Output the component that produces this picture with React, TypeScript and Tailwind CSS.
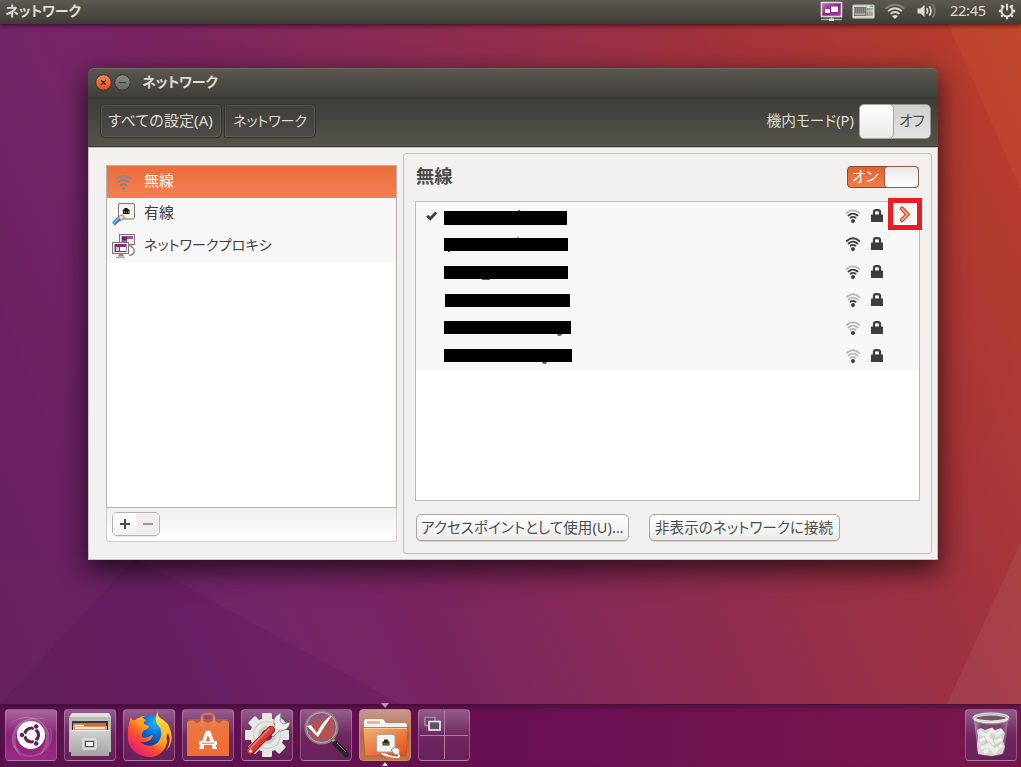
import React from "react";

type KidsProps = { children?: React.ReactNode };

function Wallpaper() {
  return (
    <svg className="absolute inset-0" width="1021" height="767" viewBox="0 0 1021 767">
      <defs>
        <linearGradient id="wall" gradientUnits="userSpaceOnUse" x1="0" y1="767" x2="1136" y2="256">
          <stop offset="0" stopColor="#67215f" />
          <stop offset="0.150" stopColor="#6b2163" />
          <stop offset="0.250" stopColor="#742569" />
          <stop offset="0.370" stopColor="#7a245e" />
          <stop offset="0.480" stopColor="#852957" />
          <stop offset="0.750" stopColor="#9f3240" />
          <stop offset="0.885" stopColor="#b03a33" />
          <stop offset="1" stopColor="#bd432d" />
        </linearGradient>
      </defs>
      <rect width="1021" height="767" fill="url(#wall)" />
      <polygon points="675,24 948,24 1021,190 1021,350 938,560 500,560 500,300" fill="#b0301c" opacity="0.1" />
      <polygon points="948,24 1021,24 1021,190" fill="#d8602f" opacity="0.18" />
      <polygon points="0,305 100,560 0,560" fill="#6a1a70" opacity="0.1" />
      <polygon points="135,558 0,704 400,704" fill="#4a1050" opacity="0.150" />
      <polygon points="1021,542 1021,704 947,704" fill="#ffffff" opacity="0.06" />
    </svg>
  );
}

function PanelIcons() {
  return (
    <div className="relative -top-px flex items-center">
      <svg width="24" height="22" viewBox="0 0 24 22">
        <defs>
          <linearGradient id="scr" x1="0" y1="0" x2="1" y2="1">
            <stop offset="0" stopColor="#c77cc4" />
            <stop offset="0.5" stopColor="#8d2089" />
            <stop offset="1" stopColor="#a548a0" />
          </linearGradient>
        </defs>
        <rect x="1.5" y="2.500" width="20" height="14" fill="url(#scr)" stroke="#dcd9d4" strokeWidth="1.6" />
        <rect x="5" y="9" width="5" height="4" fill="#f8eff7" />
        <rect x="11" y="6.500" width="7" height="5.500" fill="#fff" />
        <path d="M11.500 17v2M1 19.500h21" stroke="#aaa79f" strokeWidth="1.400" />
        <rect x="9" y="18.500" width="5" height="2.500" fill="#dfdbd2" />
      </svg>
      <svg className="ml-[8px]" width="23" height="15" viewBox="0 0 23 15">
        <rect x="0.5" y="0.8" width="22" height="13.500" rx="1" fill="#dedcd6" stroke="#98958c" />
        <rect x="2" y="3" width="12.500" height="9" fill="#74736e" />
        <rect x="15" y="4" width="5.500" height="8" fill="#868580" />
        <path d="M2 5h13M2 7h13M2 9h13" stroke="#bbb9b3" strokeWidth="0.7" strokeDasharray="1 1" />
        <path d="M16.800 3v9M19 3v9M15 7h6" stroke="#dedcd6" strokeWidth="0.8" />
        <rect x="3" y="9.500" width="10" height="1.200" fill="#c5c3bd" />
        <rect x="18" y="1.800" width="3" height="1.300" fill="#64c45c" />
      </svg>
      <svg className="ml-[9px]" width="22" height="18" viewBox="0 0 22 18" fill="none" strokeLinecap="butt">
        <path d="M1.600 6.600 Q11 -1.200 20.400 6.600" stroke="#85837b" strokeWidth="1.600" />
        <path d="M4 9.200 Q11 3.300 18 9.200" stroke="#dfdbd2" strokeWidth="1.700" />
        <path d="M6.500 11.800 Q11 8.200 15.500 11.800" stroke="#dfdbd2" strokeWidth="1.700" />
        <path d="M8 13.900 Q11 11.900 14 13.900 L11 17z" fill="#dfdbd2" />
      </svg>
      <svg className="ml-[10px]" width="22" height="18" viewBox="0 0 22 18" fill="none">
        <path d="M1.500 6.500h3L8.500 3v12l-4-3.500h-3z" fill="#dfdbd2" />
        <path d="M10.700 6.300q1.800 2.700 0 5.400M13.400 4.300q3.100 4.700 0 9.400" stroke="#dfdbd2" strokeWidth="1.700" />
        <path d="M16.500 2.300q4.500 6.700 0 13.400" stroke="#85837b" strokeWidth="1.500" />
      </svg>
      <span className="ml-[12px] w-[37px] whitespace-nowrap text-[14.600px] tracking-[-0.300px]">22:45</span>
      <svg className="ml-[11px]" width="18" height="18" viewBox="0 0 18 18" fill="none" stroke="#dfdbd2">
        <path d="M6.300 4.100a5.500 5.500 0 1 0 5.400 0" strokeWidth="2" />
        <path d="M9 1.800v6.400" strokeWidth="2" />
        <path d="M3.200 3.200l2 2M14.800 3.200l-2 2M.8 9h2.500M14.700 9h2.500M3.200 14.800l2-2M14.800 14.800l-2-2M9 14.600v2.600" strokeWidth="2.300" />
      </svg>
    </div>
  );
}

function TopBar() {
  return (
    <header className="relative flex h-6 shrink-0 items-center justify-between bg-gradient-to-b from-[#5b5950] to-[#3e3d37] pl-[5px] pr-[5px] text-[#dfdbd2] shadow-[0_1px_5px_rgba(0,0,0,0.7)]">
      <span className="relative -top-[2px] whitespace-nowrap text-[14px] font-bold tracking-[-0.150px]">ネットワーク</span>
      <PanelIcons />
    </header>
  );
}

function TitleBar() {
  return (
    <div className="flex h-[29px] items-center rounded-t-[6px] border-t border-[#6b6960] bg-gradient-to-b from-[#59574f] to-[#403f3a] pl-[7px]">
      <svg className="relative -top-px" width="36" height="18" viewBox="0 0 36 18">
        <defs>
          <linearGradient id="close" x1="0" y1="0" x2="0" y2="1">
            <stop offset="0" stopColor="#f58a62" />
            <stop offset="1" stopColor="#e0501c" />
          </linearGradient>
          <linearGradient id="mini" x1="0" y1="0" x2="0" y2="1">
            <stop offset="0" stopColor="#8e8c85" />
            <stop offset="1" stopColor="#66655f" />
          </linearGradient>
        </defs>
        <circle cx="8.500" cy="9.500" r="7.800" fill="url(#close)" stroke="#33322e" />
        <path d="M6 7l5 5M11 7l-5 5" stroke="#522612" strokeWidth="1.100" />
        <circle cx="27.500" cy="9.500" r="7.800" fill="url(#mini)" stroke="#33322e" />
        <path d="M24 9.500h7" stroke="#393833" strokeWidth="1.100" />
      </svg>
      <span className="relative -top-[2px] ml-[11px] whitespace-nowrap text-[14px] font-bold tracking-[-0.150px] text-[#dfdbd2]">ネットワーク</span>
    </div>
  );
}

function Toolbar() {
  const crumb =
    "flex items-center whitespace-nowrap border border-[#35342f] bg-gradient-to-b from-[#403f3a] to-[#4d4b44] shadow-[inset_0_0_0_1px_rgba(255,255,255,0.09)]";
  return (
    <div className="flex h-[50px] items-center justify-between border-b border-[#383732] bg-gradient-to-b from-[#3c3b37] to-[#54534a] pl-3 pr-[7px] text-[14.500px] text-[#dfdbd2]">
      <div className="relative -top-px flex gap-[2px]">
        <button className={crumb + " h-[34px] w-[122px] rounded-[5px] pl-[7px] text-[15px] tracking-[0.100px]"}>
          <span>すべての設定(A)</span>
        </button>
        <button className={crumb + " h-[34px] w-[92px] rounded-r-[5px] pl-2 text-[14px]"}>ネットワーク</button>
      </div>
      <div className="flex items-center gap-[5px]">
        <span className="relative -top-px whitespace-nowrap text-[14.700px] tracking-[0.050px]">機内モード(P)</span>
        <div className="flex h-[35px] w-[72px] rounded-[5px] border border-[#96948e] bg-gradient-to-b from-[#cfcfcf] to-[#e4e4e4] text-[#4c4c4c]">
          <div className="-my-px -ml-px w-[35px] rounded-[5px] border border-[#a7a49e] bg-gradient-to-b from-white to-[#e9e9e8]" />
          <span className="relative -top-px flex flex-1 items-center justify-center whitespace-nowrap text-[14.500px]">オフ</span>
        </div>
      </div>
    </div>
  );
}

function SideWifi() {
  return (
    <svg width="24" height="24" viewBox="0 0 24 24" fill="none" stroke="#8c8781" strokeWidth="2" strokeLinecap="round">
      <path d="M4.500 8.500Q11.500 3 18.500 8.500M6.500 12Q11.500 8 16.500 12M8.500 15.300Q11.500 13 14.500 15.300" />
      <circle cx="11.500" cy="18.300" r="1.500" fill="#8c8781" stroke="none" />
    </svg>
  );
}

function SideWired() {
  return (
    <svg width="24" height="24" viewBox="0 0 24 24">
      <rect x="6.500" y="1.500" width="16" height="15.500" rx="1.500" fill="#f2f2f0" stroke="#777872" />
      <path d="M11 12V7.500h1.500V6h3v1.500h2V12z" fill="#080808" />
      <path d="M12.500 9v2M14.500 9v2M16.500 9v2" stroke="#bba622" strokeWidth="0.800" />
      <path d="M6.500 14.500l4-1.500 2 2.500-3.500 3-3 .5z" fill="#ddd" stroke="#777" strokeWidth="0.900" />
      <path d="M1.500 22l6-6" stroke="#3c6ea8" strokeWidth="4" />
      <path d="M1.500 21.500l6-6" stroke="#9ec4e8" strokeWidth="1.500" />
      <path d="M8 14l3 3" stroke="#fff" />
    </svg>
  );
}

function SideProxy() {
  return (
    <svg width="26" height="26" viewBox="0 0 26 26">
      <path d="M20 14q4 1 3 5t-5 3" stroke="#777" fill="none" strokeWidth="1.200" />
      <rect x="8.500" y="1.500" width="15" height="10" fill="#eee" stroke="#777872" />
      <rect x="10.500" y="3" width="11.500" height="7" fill="#9a5292" />
      <path d="M16 6h6V10h-6z" fill="#f4eaf3" />
      <path d="M11 4h5v3h-5z" fill="#702068" />
      <path d="M20 12v2" stroke="#999" strokeWidth="3" />
      <rect x="1.500" y="9.500" width="16" height="11" fill="#eee" stroke="#777872" />
      <rect x="3.500" y="11" width="12" height="8" fill="#842c7c" />
      <path d="M9 14h6v4H9z" fill="#fff" />
      <path d="M5 14h3V18H5z" fill="#e3c5df" />
      <path d="M8 21h4l1 2.500H7z" fill="#888" />
      <path d="M5 24.500h9" stroke="#aaa" strokeWidth="1.300" />
    </svg>
  );
}

function Sidebar() {
  const row = "flex h-8 items-center whitespace-nowrap text-[#3c3c3c]";
  return (
    <aside className="ml-[17px] mt-[17px] flex h-[377px] w-[291px] flex-col">
      <div className="h-[343px] border border-[#b5b2ad] bg-white text-[14.900px]">
        <div className={row + " bg-gradient-to-b from-[#ea6d3c] to-[#f67f50] pl-[5px] text-white"}>
          <SideWifi />
          <span className="relative -top-[2px] ml-2 text-white">無線</span>
        </div>
        <div className={row + " bg-[#f7f7f7] pl-[5px]"}>
          <SideWired />
          <span className="relative -top-[2px] ml-2">有線</span>
        </div>
        <div className={row + " bg-[#f7f7f7] pl-[4px]"}>
          <SideProxy />
          <span className="relative -top-[2px] ml-[7px] text-[14px] tracking-[0.100px]">ネットワークプロキシ</span>
        </div>
      </div>
      <div className="flex h-[34px] items-start rounded-b-[3px] border border-t-0 border-[#d0cdc9] bg-gradient-to-b from-[#f0efee] to-white pl-[5px] pt-[4px]">
        <div className="flex h-[24px] w-[48px] overflow-hidden rounded-[5px] border border-[#b5b2ae] shadow-[0_1px_0_rgba(0,0,0,0.08)]">
          <button className="flex w-[23px] items-center justify-center bg-gradient-to-b from-white to-[#f0f0ef]">
            <svg width="12" height="12" viewBox="0 0 12 12"><path d="M1 6h10M6 1v10" stroke="#4a4a4a" strokeWidth="2" /></svg>
          </button>
          <button className="flex flex-1 items-center justify-center bg-[#eeedec]">
            <svg width="12" height="12" viewBox="0 0 12 12"><path d="M1 6h10" stroke="#9e978d" strokeWidth="2" /></svg>
          </button>
        </div>
      </div>
    </aside>
  );
}

function Signal({ level }: { level: number }) {
  const c = (n: number) => (level >= n ? "#3c3c3c" : "#b9b9b9");
  return (
    <svg width="16" height="14" viewBox="0 0 16 14" fill="none" strokeLinecap="round" strokeWidth="1.800">
      <path d="M1.800 4Q8-1.400 14.200 4" stroke={c(4)} />
      <path d="M3.500 6.500Q8 2.700 12.500 6.500" stroke={c(3)} />
      <path d="M5.500 8.700Q8 7 10.500 8.700" stroke={c(2)} />
      <circle cx="8" cy="12" r="2" fill="#3c3c3c" />
    </svg>
  );
}

function Lock() {
  return (
    <svg width="12" height="13" viewBox="0 0 12 13">
      <path d="M3 7V3.300Q3 1.200 5 1.200h2Q9 1.200 9 3.300V7" fill="none" stroke="#3c3c3c" strokeWidth="2.200" />
      <rect y="5.500" width="12" height="7.500" rx="0.500" fill="#3c3c3c" />
    </svg>
  );
}

type Network = { bar: string; level: number; marks: string[] };

const networks: Network[] = [
  { bar: "ml-0 mt-[9px] h-[14px] w-[123px]", level: 3, marks: ["left-[74px] -top-[1px] h-px w-[2px] bg-[#3d5d90]"] },
  { bar: "ml-0 mt-[8px] h-[13px] w-[124px]", level: 4, marks: ["left-[73px] -top-[1px] h-px w-[2px] bg-[#aaa]", "left-[4px] -bottom-[1px] h-px w-[2px] bg-[#555]"] },
  { bar: "ml-0 mt-[8px] h-[13px] w-[124px]", level: 3, marks: ["left-[38px] -bottom-[1px] h-px w-[8px] bg-[#555]"] },
  { bar: "ml-px mt-[8px] h-[13px] w-[125px]", level: 2, marks: [] },
  { bar: "ml-0 mt-[7px] h-[13px] w-[127px]", level: 1, marks: ["left-[113px] -bottom-[2px] h-[2px] w-[5px] rounded-b-full bg-[#666]"] },
  { bar: "ml-0 mt-[7px] h-[13px] w-[128px]", level: 1, marks: ["left-[98px] -bottom-[2px] h-[2px] w-[5px] rounded-b-full bg-[#666]"] },
];

function NetworkRow({ net, active }: { net: Network; active: boolean }) {
  return (
    <div className="relative flex h-7 bg-[#f7f7f7]">
      <div className="flex w-[28px] items-center pl-[10px]">
        {active && (
          <svg width="12" height="10" viewBox="0 0 12 10">
            <path d="M1.200 4.800l3 3 6-6.300" fill="none" stroke="#3c3c3c" strokeWidth="2.700" />
          </svg>
        )}
      </div>
      <div className={"relative bg-black " + net.bar}>
        {net.marks.map((m) => (
          <span key={m} className={"absolute " + m} />
        ))}
      </div>
      <div className="ml-auto flex w-[74px] items-center">
        <Signal level={net.level} />
        <span className="-mt-[1px] ml-[10px]"><Lock /></span>
      </div>
      {active && (
        <div className="absolute -right-[3px] -top-[4px] flex h-[32px] w-[34px] items-center justify-center border-[5px] border-[#ed1c24] bg-[#f7f7f7]">
          <svg width="14" height="18" viewBox="0 0 14 18">
            <path d="M4 3.500L9.500 9.500l-5.500 5.500" fill="none" stroke="#cf4a20" strokeWidth="4.200" strokeLinecap="round" />
            <path d="M4 3.500L9.500 9.500l-5.500 5.500" fill="none" stroke="#f1a27d" strokeWidth="2" strokeLinecap="round" />
          </svg>
        </div>
      )}
    </div>
  );
}

function GtkButton({ children, size }: KidsProps & { size: string }) {
  return (
    <button className={"h-[27px] whitespace-nowrap rounded-[5px] border border-[#aaa7a2] bg-gradient-to-b from-white to-[#ebebea] text-left text-[14.500px] leading-[23px] text-[#4c4c4c] shadow-[0_1px_0_rgba(0,0,0,0.12)] " + size}>
      {children}
    </button>
  );
}

function WirelessPanel() {
  return (
    <section className="ml-[6px] mt-[5px] h-[401px] w-[529px] rounded-[3px] border border-[#c2bfba] pl-[11px] pr-[11px] pt-3">
      <div className="flex h-[23px] items-start justify-between">
        <h1 className="ml-px pt-[1px] text-[18.300px] font-bold leading-none text-[#4c4c4c]">無線</h1>
        <div className="mr-px flex h-[22px] w-[72px] rounded-[4px] border border-[#8f4526] bg-gradient-to-b from-[#e2622f] to-[#f47c4c] text-white">
          <span className="flex-1 whitespace-nowrap pl-[4px] text-[14.500px] leading-[19px]">オン</span>
          <div className="-my-px -mr-px w-[35px] rounded-[4px] border border-[#8f5d48] bg-gradient-to-b from-[#e9e9e8] to-white" />
        </div>
      </div>
      <div className="mt-[12px] h-[300px] w-[505px] border border-[#bebbb5] bg-white">
        {networks.map((n, i) => (
          <NetworkRow key={i} net={n} active={i === 0} />
        ))}
      </div>
      <div className="ml-px mt-[13px] flex gap-5">
        <GtkButton size="w-[213px] pl-[4px] tracking-[0.080px]">アクセスポイントとして使用(U)...</GtkButton>
        <GtkButton size="w-[191px] pl-[5px] tracking-[0.080px]">非表示のネットワークに接続</GtkButton>
      </div>
    </section>
  );
}

function SettingsWindow() {
  return (
    <main className="relative ml-[88px] mt-[44px] h-[492px] w-[850px] rounded-t-[6px] shadow-[0_9px_26px_2px_rgba(0,0,0,0.65)]">
      <TitleBar />
      <Toolbar />
      <div className="flex h-[413px] border border-[#c5c2bd] bg-[#f2f1f0]">
        <Sidebar />
        <WirelessPanel />
      </div>
    </main>
  );
}

function Tile({ children, active }: KidsProps & { active?: boolean }) {
  return (
    <div
      className={
        "relative flex h-[52px] w-[52px] items-center justify-center overflow-visible rounded-[4px] border " +
        (active
          ? "border-[#c98d66] bg-gradient-to-b from-[#c99a90] via-[#b06a4b] to-[#bd7551]"
          : "border-white/25 bg-gradient-to-b from-[#935c8b] via-[#70265f] to-[#692059]")
      }
    >
      {children}
    </div>
  );
}

function UbuntuIcon() {
  return (
    <svg width="50" height="50" viewBox="0 0 50 50">
      <defs>
        <linearGradient id="dash" x1="0" y1="0" x2="0" y2="1">
          <stop offset="0" stopColor="#a9669d" />
          <stop offset="0.5" stopColor="#8b2377" />
          <stop offset="1" stopColor="#9b2a86" />
        </linearGradient>
      </defs>
      <rect width="50" height="50" rx="3" fill="url(#dash)" />
      <path d="M3 14Q25-2 40 17Q50 32 33 46Q45 27 36 14Q22 2 3 14z" fill="#fff" opacity="0.2" />
      <path d="M18 49Q-1 35 9 18Q20 3 43 10Q20 5 12 20Q5 35 18 49z" fill="#fff" opacity="0.2" />
      <path d="M8 36Q18 52 35 43Q49 35 44 18" fill="none" stroke="#fff" opacity="0.15" strokeWidth="1.500" />
      <circle cx="25" cy="25" r="14" fill="#fff" />
      <circle cx="25.500" cy="25" r="7" fill="none" stroke="#641b56" strokeWidth="3.200" />
      <path d="M25.500 25L13 25M25.500 25l6 10.800M25.500 25l6-10.800" stroke="#fff" strokeWidth="1.700" />
      <circle cx="25.500" cy="25" r="4.600" fill="#fff" />
      {[[16, 25], [30.200, 16.500], [30.200, 33.500]].map(([x, y]) => (
        <circle key={y} cx={x} cy={y} r="2.700" fill="#641b56" stroke="#fff" strokeWidth="0.900" />
      ))}
    </svg>
  );
}

function FilesIcon() {
  return (
    <svg width="50" height="50" viewBox="0 0 50 50">
      <defs>
        <linearGradient id="cab" x1="0" y1="0" x2="0" y2="1">
          <stop offset="0" stopColor="#d2d2d1" />
          <stop offset="1" stopColor="#a2a2a1" />
        </linearGradient>
      </defs>
      <path d="M7 4h37l2 4v34H4V8z" fill="#bcbcbb" />
      <path d="M7 3h37l2 4H4z" fill="#dededd" />
      <rect x="7" y="11" width="36" height="10" fill="#393735" />
      <rect x="8" y="13" width="33" height="8" fill="#c96c35" />
      <path d="M8 16h34v5H8z" fill="#eb9554" />
      <path d="M9 15.500h10M10 18h30" stroke="#fff" strokeWidth="1.300" />
      <path d="M5 20h40l-1 26H6z" fill="url(#cab)" />
      <path d="M5 20.500h40" stroke="#f4f4f3" />
      <rect x="18" y="29" width="13" height="10" rx="1.500" fill="#bbb" stroke="#e5e5e4" strokeWidth="1.500" />
      <rect x="20.500" y="31.500" width="8" height="5" fill="#f3f3f2" stroke="#555" />
    </svg>
  );
}

function FirefoxIcon() {
  return (
    <svg width="50" height="50" viewBox="0 0 50 50">
      <defs>
        <linearGradient id="fox" x1="0.850" y1="0.100" x2="0.200" y2="0.900">
          <stop offset="0" stopColor="#ffe537" />
          <stop offset="0.350" stopColor="#ffa31f" />
          <stop offset="0.650" stopColor="#ff4b32" />
          <stop offset="1" stopColor="#e51c75" />
        </linearGradient>
        <radialGradient id="globe" cx="0.650" cy="0.250" r="0.800">
          <stop offset="0" stopColor="#22b9ef" />
          <stop offset="0.500" stopColor="#0870d9" />
          <stop offset="1" stopColor="#25317f" />
        </radialGradient>
        <linearGradient id="tail" x1="0.500" y1="0" x2="0.500" y2="1">
          <stop offset="0" stopColor="#fff13e" />
          <stop offset="1" stopColor="#ff8a1d" />
        </linearGradient>
      </defs>
      <path d="M7 7Q8 12 12 10Q18 5 26 6L39 16L43 32Q39 47 25 47Q7 45 4 30Q3 18 7 7z" fill="url(#fox)" />
      <circle cx="27" cy="20.500" r="15.500" fill="url(#globe)" />
      <path d="M7 7Q8 12 11 10Q15 7 19 8L21 10L19 14L25 16Q24 19 20 20Q17 24 18 27Q23 29 28 25Q30 26 26 30Q20 34 15 31Q22 39 32 34Q43 29 37 19Q46 26 41 38Q35 47 24 47Q9 45 5 31Q3 18 7 7z" fill="url(#fox)" />
      <path d="M15 13Q18 8 23 10Q19 11 20 14l5 2Q24 20 19 20z" fill="#ff9a23" />
      <path d="M34 1Q30 8 33 14Q40 21 36 29Q34 34 29 36Q42 34 44 23Q48 31 42 41Q50 33 47 22Q45 12 36 8Q33 5 34 1z" fill="url(#tail)" />
    </svg>
  );
}

function SoftwareIcon() {
  return (
    <svg width="50" height="50" viewBox="0 0 50 50">
      <defs>
        <linearGradient id="bag" x1="0" y1="0" x2="0" y2="1">
          <stop offset="0" stopColor="#e97a48" />
          <stop offset="1" stopColor="#f36c2f" />
        </linearGradient>
      </defs>
      <path d="M19 17V7q0-3 3-3h6q3 0 3 3v10" fill="none" stroke="#cb714c" strokeWidth="2.600" />
      <path d="M5 9h40v4H5z" fill="#b75a36" />
      <path d="M4 12l5-2 5 3 5-3 6 3 6-3 5 3 5-3 5 2v34H4z" fill="url(#bag)" />
      <path d="M19 17V7M31 17V7" fill="none" stroke="#d98964" strokeWidth="2.500" />
      <path d="M18.500 37.500L24 22.500h2L31.500 37.500" fill="none" stroke="#fff" strokeWidth="3.600" />
      <path d="M16 33h18" stroke="#fff" strokeWidth="4" />
      <path d="M19 33.200h12" stroke="#dd6534" strokeWidth="0.900" />
      <path d="M16 38h5M29 38h5" stroke="#fff" strokeWidth="2" />
    </svg>
  );
}

function SettingsIcon() {
  return (
    <svg width="50" height="50" viewBox="0 0 50 50">
      <g transform="translate(25 25)" fill="#e6e6e4">
        {[0, 45, 90, 135, 180, 225, 270, 315].map((a) => (
          <rect key={a} x="-5" y="-22" width="10" height="12" rx="1" transform={`rotate(${a})`} />
        ))}
        <circle r="17" />
        <circle r="13.500" fill="none" stroke="#cdcdcb" strokeWidth="1.200" />
        <circle r="9" fill="#c9c9c7" />
        <circle r="5.500" fill="#692359" />
      </g>
      <path d="M27 22l6-6q-4-9 6-13l-1 8 3 3 7-2q-1 9-11 9l-6 6z" fill="#efefed" stroke="#878782" strokeWidth="0.900" />
      <path d="M8.500 41L29 20" stroke="#861e1b" strokeWidth="8.200" strokeLinecap="round" />
      <path d="M8.500 40.500L29 19.500" stroke="#d83c32" strokeWidth="6.400" strokeLinecap="round" />
      <path d="M8 38.500L27 19" stroke="#f17763" strokeWidth="1.500" strokeLinecap="round" />
      <circle cx="8.500" cy="41" r="1.500" fill="#fff" />
    </svg>
  );
}

function ReviewIcon() {
  return (
    <svg width="50" height="50" viewBox="0 0 50 50">
      <path d="M31 29l6 6" stroke="#aaa" strokeWidth="3" />
      <path d="M34.500 33.500l11 11" stroke="#252525" strokeWidth="5.500" strokeLinecap="round" />
      <path d="M36 33l9 9" stroke="#777" strokeWidth="1" />
      <circle cx="20.500" cy="17.500" r="16" fill="#7f3c68" />
      <path d="M9 12l23-5 2 21-22 3z" fill="#a63434" />
      <circle cx="20.500" cy="17.500" r="16" fill="#fff" opacity="0.150" />
      <path d="M6 16l4-1 6 8Q22 10 32 4Q24 15 17 27z" fill="#fff" />
      <circle cx="20.500" cy="17.500" r="16" fill="none" stroke="#85837f" strokeWidth="2" />
      <circle cx="20.500" cy="17.500" r="15" fill="none" stroke="#d1c3cc" strokeWidth="0.700" />
    </svg>
  );
}

function NetworkFolderIcon() {
  return (
    <svg width="50" height="50" viewBox="0 0 50 50">
      <defs>
        <linearGradient id="folder" x1="0" y1="0" x2="0.800" y2="1">
          <stop offset="0" stopColor="#edb877" />
          <stop offset="1" stopColor="#ec4e1c" />
        </linearGradient>
      </defs>
      <path d="M4 11q0-2 2-2h17l3 4h19q2 0 2 2v6H4z" fill="#f3f2f0" />
      <path d="M7 12.500h13" stroke="#edaa7c" strokeWidth="2.400" />
      <path d="M3 17.500h45L46 46H5z" fill="url(#folder)" stroke="#bf5625" strokeWidth="0.700" />
      <path d="M4 18.500h43" stroke="#f8cd94" />
      <rect x="16.500" y="24.500" width="18.500" height="17.500" rx="2" fill="#f3f3f0" stroke="#aaa69f" />
      <path d="M22.500 35.500v-4h1.500v-2h4v2h1.500v4z" fill="#242b1e" />
      <path d="M23 34h6" stroke="#ad9a22" />
      <path d="M31 40l4-3 5 2-1 5-4 1z" fill="#f3f3f2" stroke="#888" />
      <path d="M38 44q4 4-4 3t-11-3q-3-1 5 1" fill="none" stroke="#f3f3f2" strokeWidth="1.600" />
    </svg>
  );
}

function WorkspaceIcon() {
  return (
    <svg width="50" height="50" viewBox="0 0 50 50" fill="none">
      <path d="M1 25.500h48M25.500 1v48" stroke="#b88aac" strokeWidth="0.900" />
      <rect x="6" y="7.500" width="10" height="8" fill="#684162" stroke="#a68ca1" strokeWidth="1.500" />
      <rect x="10" y="11.500" width="11" height="8.500" fill="#5f5360" stroke="#e9e5e8" strokeWidth="1.700" />
    </svg>
  );
}

function TrashIcon() {
  return (
    <svg width="50" height="50" viewBox="0 0 50 50">
      <defs>
        <linearGradient id="glass" x1="0" y1="0" x2="1" y2="0">
          <stop offset="0" stopColor="#ccb7c6" />
          <stop offset="0.200" stopColor="#78486f" />
          <stop offset="0.800" stopColor="#78486f" />
          <stop offset="1" stopColor="#b794ad" />
        </linearGradient>
      </defs>
      <path d="M8 10l4 34q13 6 26 0l4-34z" fill="url(#glass)" opacity="0.700" />
      <path d="M11 20l4-2 4 2 5-2 5 2 6-2 4 5-2 8 2 6-3 7-10 2-8-1-6-1-1-9 1-8z" fill="#d7d7d2" />
      <path d="M13 22l8 4 5-6 4 5 7-4M14 31l7-4 6 6 9-4M15 38l8-3 5 6 8-6M18 43l5-5 7 5" fill="none" stroke="#eeeeea" strokeWidth="3.400" />
      <path d="M18 26l3 6-5 3M29 24l-2 8 6 5M22 38l4 4M33 34l-5 3" fill="none" stroke="#c0bfba" strokeWidth="0.800" />
      <ellipse cx="25" cy="8" rx="17" ry="4" fill="#72586c" stroke="#e4e3dc" strokeWidth="3" />
      <ellipse cx="25" cy="9" rx="17.800" ry="5" fill="none" stroke="#a2a295" strokeWidth="0.800" />
    </svg>
  );
}

function Launcher() {
  return (
    <nav className="relative mt-auto flex h-[63px] shrink-0 items-start justify-between border-t border-[#45113b] bg-gradient-to-r from-[#5b114f] via-[#680f52] to-[#7b164c] pb-[6px] pl-[5px] pr-[4px] pt-1 shadow-[inset_0_3px_4px_rgba(20,0,20,0.25)]">
      <div className="flex gap-[7px]">
        <Tile><UbuntuIcon /></Tile>
        <Tile><FilesIcon /></Tile>
        <Tile><FirefoxIcon /></Tile>
        <Tile><SoftwareIcon /></Tile>
        <Tile><SettingsIcon /></Tile>
        <Tile><ReviewIcon /></Tile>
        <Tile active>
          <NetworkFolderIcon />
          <svg className="absolute -top-[7px] left-[21px]" width="8" height="6" viewBox="0 0 8 6"><path d="M0 0h8L4 5z" fill="#aaa1a8" /></svg>
          <svg className="absolute -bottom-[6px] left-[21px]" width="8" height="5" viewBox="0 0 8 5"><path d="M1 5l3-4 3 4z" fill="#e5dde2" /></svg>
        </Tile>
        <Tile><WorkspaceIcon /></Tile>
      </div>
      <Tile><TrashIcon /></Tile>
    </nav>
  );
}

export default function App() {
  return (
    <div className="relative flex h-[767px] w-[1021px] flex-col overflow-hidden font-['Noto_Sans','Noto_Sans_CJK_JP',sans-serif] [font-feature-settings:'palt']">
      <Wallpaper />
      <TopBar />
      <SettingsWindow />
      <Launcher />
    </div>
  );
}
